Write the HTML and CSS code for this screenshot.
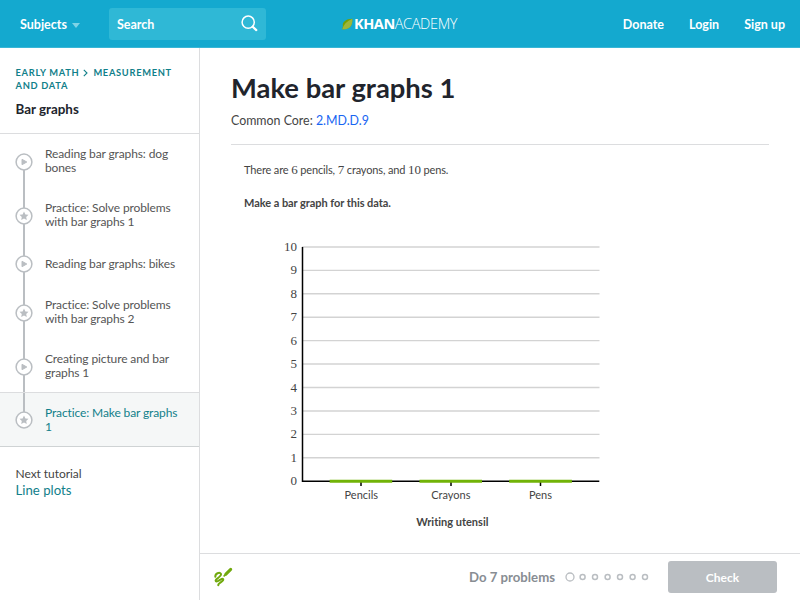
FILE: index.html
```html
<!DOCTYPE html>
<html lang="en">
<head>
<meta charset="utf-8">
<title>Make bar graphs 1</title>
<link rel="stylesheet" href="styles.css">
</head>
<body>
<svg class="defs" width="0" height="0">
  <symbol id="play" viewBox="0 0 18 18"><circle cx="9" cy="9" r="7.900" fill="#fff" stroke="#babec2" stroke-width="1.500"/><path d="M7 6.300v5.400L11.800 9z" fill="#babec2" stroke="#babec2" stroke-width="1" stroke-linejoin="round"/></symbol>
  <symbol id="star" viewBox="0 0 18 18"><circle cx="9" cy="9" r="7.900" fill="#fff" stroke="#babec2" stroke-width="1.500"/><path d="M9 4.600l1.400 2.800 3.100.4-2.300 2.100.6 3.100L9 11.500 6.200 13l.6-3.100-2.300-2.100 3.100-.4z" fill="#babec2"/></symbol>
</svg>
<header class="topbar">
  <div class="left">
    <a class="subjects">Subjects</a>
    <svg class="caret" width="8" height="5"><path d="M0 0h8L4 5z" fill="#7fd3e6"/></svg>
    <div class="search"><span>Search</span>
      <svg width="17" height="17" viewBox="0 0 17 17"><circle cx="7.200" cy="7.200" r="6.100" fill="none" stroke="#fff" stroke-width="1.500"/><path d="M11.700 11.700l3.600 3.400" stroke="#fff" stroke-width="2.200" stroke-linecap="round"/></svg>
    </div>
  </div>
  <div class="logo">
    <svg width="11" height="12" viewBox="0 0 11 12"><path d="M10.300.8C4 1 0 3.800.9 8.300L.2 11.300C6 11.800 11 9 10.300.8z" fill="#76a005"/><path d="M10.300.8C5 3 1.500 6.500.2 11.300 6 11.800 11 9 10.300.8z" fill="#9db63b"/></svg>
    <b>KHAN</b><span>ACADEMY</span>
  </div>
  <nav><a>Donate</a><a>Login</a><a>Sign up</a></nav>
</header>
<div class="body">
  <aside>
    <div class="tutorial">
      <div class="crumbs">EARLY MATH <svg width="5" height="8" viewBox="0 0 5 8"><path d="M.8.8L4 4 .8 7.200" fill="none" stroke="#11808a" stroke-width="1.100"/></svg> MEASUREMENT<br>AND DATA</div>
      <h2>Bar graphs</h2>
    </div>
    <ul>
      <li><svg width="18" height="18"><use href="#play"/></svg><span>Reading bar graphs: dog<br>bones</span></li>
      <li><svg width="18" height="18"><use href="#star"/></svg><span>Practice: Solve problems<br>with bar graphs 1</span></li>
      <li class="single"><svg width="18" height="18"><use href="#play"/></svg><span>Reading bar graphs: bikes</span></li>
      <li><svg width="18" height="18"><use href="#star"/></svg><span>Practice: Solve problems<br>with bar graphs 2</span></li>
      <li><svg width="18" height="18"><use href="#play"/></svg><span>Creating picture and bar<br>graphs 1</span></li>
      <li class="active"><svg width="18" height="18"><use href="#star"/></svg><span>Practice: Make bar graphs<br>1</span></li>
    </ul>
    <div class="next"><p>Next tutorial</p><a>Line plots</a></div>
  </aside>
  <main>
    <section class="content">
      <h1>Make bar graphs 1</h1>
      <p class="core">Common Core: <a>2.MD.D.9</a></p>
      <div class="exercise">
        <p>There are <i>6</i> pencils, <i>7</i> crayons, and <i>10</i> pens.</p>
        <p class="ask">Make a bar graph for this data.</p>
        <svg class="chart" width="340" height="300" viewBox="270 235 340 300">
          <path d="M302 247h297.500M302 270.400h297.500M302 293.800h297.500M302 317.200h297.500M302 340.600h297.500M302 364h297.500M302 387.500h297.500M302 411h297.500M302 434.400h297.500M302 457.800h297.500" stroke="#d3d3d3" stroke-width="1.400"/>
          <path d="M302.500 247v234.200h296.800M361 481v5M451 481v5M540.500 481v5" fill="none" stroke="#000" stroke-width="1.500"/>
          <path d="M329.700 481.200h62.500M419.500 481.200h62.500M509.200 481.200h62.700" stroke="#71b307" stroke-width="3"/>
          <g class="ticks">
            <text x="297" y="251">10</text><text x="297" y="274.400">9</text><text x="297" y="297.800">8</text><text x="297" y="321.200">7</text><text x="297" y="344.700">6</text><text x="297" y="368.100">5</text><text x="297" y="391.600">4</text><text x="297" y="415">3</text><text x="297" y="438.400">2</text><text x="297" y="461.900">1</text><text x="297" y="485.300">0</text>
          </g>
          <g class="labels"><text x="361.300" y="498.500">Pencils</text><text x="450.800" y="498.500">Crayons</text><text x="540.500" y="498.500">Pens</text><text class="axis" x="452.300" y="525.500">Writing utensil</text></g>
        </svg>
      </div>
    </section>
    <footer>
      <svg width="20" height="20" viewBox="0 0 20 20" fill="none" stroke="#71a90d" stroke-linecap="round"><path d="M2.300 9.800C2.200 6.500 6.500 4.600 7.900 6.800 9.300 9.500 1.200 12.300 2.800 14.200 4.300 16 9 10.300 10.200 12.300 11.300 14.300 4.700 15.800 5.300 18.300" stroke-width="2"/><path d="M12.900 7.100l4.800-4.700" stroke-width="3"/><path d="M11.200 8.800l1.200-1.200" stroke-width="1.800"/></svg>
      <span class="do">Do 7 problems</span>
      <svg class="dots" width="86" height="12" fill="none" stroke="#babec2" stroke-width="1.300"><circle cx="6" cy="6" r="4"/><g stroke-width="1.500"><circle cx="18.600" cy="6" r="2.500"/><circle cx="31" cy="6" r="2.500"/><circle cx="43.600" cy="6" r="2.500"/><circle cx="56" cy="6" r="2.500"/><circle cx="68.600" cy="6" r="2.500"/><circle cx="81" cy="6" r="2.500"/></g></svg>
      <button>Check</button>
    </footer>
  </main>
</div>
</body>
</html>
```

FILE: styles.css
```css
* { box-sizing: border-box; }
body { margin: 0; width: 800px; height: 600px; overflow: hidden; background: #fff; font-family: Lato, sans-serif; font-variant-ligatures: none; color: #444; display: flex; flex-direction: column; }
p, h1, h2, ul { margin: 0; padding: 0; }
.defs { position: absolute; }
.topbar { height: 48px; flex: none; background: #14a9cf; color: #fff; display: grid; grid-template-columns: 342px 1fr auto; align-items: center; padding-right: 15px; font-size: 12.500px; font-weight: 700; border-bottom: 1px solid #39b6d6; }
.left { display: flex; align-items: center; padding-left: 20px; }
.subjects { width: 48px; padding-top: 2px; }
.caret { margin: 3px 0 0 4px; }
.search { margin-left: 29px; width: 157px; height: 32px; border-radius: 3px; background: #2fb8d6; display: flex; align-items: center; justify-content: space-between; padding: 0 8px 0 8px; }
.search span { padding-top: 2px; }
.logo { display: flex; align-items: center; padding-top: 1px; font: 300 14.500px/16px "Open Sans", sans-serif; letter-spacing: -.35px; }
.logo svg { margin-right: 1px; }
.logo b { font-weight: 700; letter-spacing: -.45px; }
nav { display: flex; gap: 25px; padding-top: 2px; }
.body { flex: 1; min-height: 0; display: flex; }
aside { width: 200px; border-right: 1px solid #dcdddf; }
.tutorial { height: 86px; padding: 19px 15px 0 15.500px; border-bottom: 1px solid #dcdddf; }
.crumbs { font-size: 9.300px; line-height: 12.500px; font-weight: 700; letter-spacing: .7px; color: #11808a; white-space: nowrap; }
.crumbs svg { margin: 0 2px -1px 1px; }
h2 { margin-top: 9px; font-size: 13.400px; line-height: 16px; color: #21242c; }
li { position: relative; list-style: none; height: 54px; padding-left: 15px; display: flex; align-items: center; gap: 12px; font-size: 12px; line-height: 14px; letter-spacing: -.12px; color: #555; white-space: nowrap; }
li svg { position: relative; top: .5px; flex: none; }
li::before { content: ""; position: absolute; left: 23px; top: 0; width: 2px; height: 100%; background: #babec2; }
li:first-child::before { top: 50%; height: 50%; }
li.single { height: 43px; }
li.active { height: 55px; margin-top: -1px; background: #f5f7f7; border-top: 1px solid #dcdddf; border-bottom: 1px solid #cfd3d4; color: #11808a; }
li.active::before { height: 50%; }
.next { padding: 18px 0 0 15.500px; font-size: 12px; line-height: 17px; }
.next p { letter-spacing: -.05px; }
.next a { font-size: 13.200px; line-height: 17px; color: #11808a; display: block; }
main { flex: 1; display: flex; flex-direction: column; }
.content { flex: 1; min-height: 0; padding: 23px 31px 0; }
h1 { font-size: 27.400px; line-height: 34px; color: #21242c; }
.core { margin-top: 7px; height: 33px; font-size: 12.400px; line-height: 18px; border-bottom: 1px solid #dcdddf; }
.core a { color: #1865f2; }
.exercise { padding: 17px 0 0 13px; font-size: 11px; line-height: 16px; letter-spacing: -.15px; }
.exercise i { font: 13px/16px "Liberation Serif", serif; letter-spacing: 0; }
.ask { margin-top: 17px; font-weight: 700; letter-spacing: -.05px; }
.chart { display: block; margin: 24px 0 0 26px; letter-spacing: 0; }
.ticks { font: 13px "Liberation Serif", serif; fill: #444; text-anchor: end; }
.labels { font: 11px Lato, sans-serif; font-variant-ligatures: none; fill: #444; text-anchor: middle; }
.axis { font-weight: 700; }
footer { height: 47px; flex: none; border-top: 1px solid #dcdddf; display: flex; align-items: center; padding: 0 23px 0 13px; }
.do { margin-left: auto; font-size: 13.200px; font-weight: 700; color: #888d93; }
.dots { margin: 0 18px 0 9px; }
footer button { width: 109px; height: 32px; border: 0; border-radius: 3px; background: #babec2; color: #fff; font: 700 12px Lato, sans-serif; }
```
